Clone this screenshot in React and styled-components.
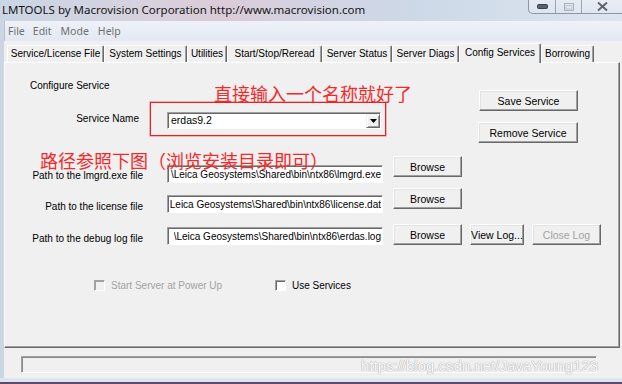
import React from 'react';
import styled, { createGlobalStyle } from 'styled-components';

const Global = createGlobalStyle`
  html, body {
    margin: 0;
    padding: 0;
    background: #4a3a58;
  }
  body {
    width: 622px;
    height: 384px;
    overflow: hidden;
    font-family: "Liberation Sans", Arial, sans-serif;
  }
  * { box-sizing: border-box; }
`;

const Win = styled.div`
  position: relative;
  width: 622px;
  height: 384px;
  display: flex;
  flex-direction: column;
  padding-left: 4px;
  background: linear-gradient(90deg, #cbd6e4 0%, #d6d2df 22%, #dccbd8 36%, #d2d3e2 50%, #cdd9e8 68%, #dde5f0 100%);
  overflow: hidden;
`;

const TitleBar = styled.div`
  height: 21px;
  margin-left: -2px;
  display: flex;
  justify-content: space-between;
  align-items: flex-start;
`;

const TitleText = styled.div`
  font-family: "Noto Sans", "Open Sans", sans-serif;
  font-size: 11.5px;
  line-height: 19px;
  color: #151515;
  white-space: nowrap;
`;

const CaptionGroup = styled.div`
  display: flex;
  height: 14px;
  border: 1px solid rgba(70, 80, 100, 0.55);
  border-top: none;
  border-right: none;
  border-radius: 0 0 0 5px;
  background: linear-gradient(rgba(255,255,255,0.35), rgba(255,255,255,0.15));
`;

const CaptionBtn = styled.div`
  width: ${p => p.$w}px;
  display: flex;
  align-items: center;
  justify-content: center;
  border-left: ${p => (p.$first ? 'none' : '1px solid rgba(70, 80, 100, 0.45)')};
`;

const Client = styled.div`
  flex: 1;
  display: flex;
  flex-direction: column;
  background: #f0f0f0;
`;

const MenuBar = styled.div`
  height: 20px;
  display: flex;
  align-items: center;
  background: linear-gradient(#eef1f8, #e3e8f2);
  border-left: 1px solid #b9c2cf;
`;

const MenuItem = styled.span`
  font-family: "Noto Sans", "Open Sans", sans-serif;
  font-size: 10.5px;
  color: #707070;
  padding: 0 ${p => p.$pad}px 0 ${p => p.$padL}px;
`;

const TabStrip = styled.div`
  height: 21px;
  display: flex;
  align-items: flex-end;
  padding-left: 3px;
`;

const Tab = styled.div`
  position: relative;
  z-index: ${p => (p.$active ? 3 : 0)};
  width: ${p => p.$w}px;
  height: ${p => (p.$active ? 20 : 17)}px;
  margin-bottom: ${p => (p.$active ? -1 : 0)}px;
  display: flex;
  align-items: center;
  justify-content: center;
  padding-bottom: ${p => (p.$active ? 3 : 1)}px;
  font-size: 10px;
  color: #000;
  white-space: nowrap;
  background: #f0f0f0;
  border-top: 1px solid #fff;
  border-left: 1px solid #fff;
  border-right: 1px solid #696969;
  box-shadow: inset -1px 0 #a0a0a0;
  border-radius: 2px 2px 0 0;
`;

const Panel = styled.div`
  position: relative;
  z-index: 1;
  width: 616px;
  height: 286px;
  background: #f0f0f0;
  border: 1px solid;
  border-color: #fff #696969 #696969 #fff;
  box-shadow: inset -1px -1px #a0a0a0;
  display: flex;
  flex-direction: column;
  font-size: 10px;
  color: #000;
`;

const TopArea = styled.div`
  height: 93px;
  display: flex;
  justify-content: space-between;
  align-items: flex-start;
`;

const ConfigCol = styled.div`
  padding: 17px 0 0 25px;
  display: flex;
  flex-direction: column;
`;

const SectionTitle = styled.div`
  line-height: 12px;
`;

const NameRow = styled.div`
  margin-top: 10px;
  display: flex;
  align-items: center;
`;

const FieldLabel = styled.div`
  width: ${p => p.$w}px;
  margin-top: ${p => p.$mt || 0}px;
  text-align: right;
  line-height: 12px;
  white-space: nowrap;
`;

const RedFrame = styled.div`
  margin-left: 11px;
  width: 236px;
  height: 34px;
  padding: 9px 0 0 16px;
  border: 1px solid #ef1d1d;
  box-shadow: 0 0 0 0.6px rgba(240, 40, 40, 0.5);
`;

const Combo = styled.div`
  width: 214px;
  height: 17px;
  display: flex;
  background: #fff;
  border: 1px solid;
  border-color: #a0a0a0 #fff #fff #a0a0a0;
  box-shadow: inset 1px 1px #696969;
`;

const ComboText = styled.div`
  flex: 1;
  padding: 1px 0 0 3px;
  line-height: 13px;
  font-size: 10.5px;
`;

const ComboArrow = styled.div`
  width: 14px;
  margin: 1px 0 0 0;
  display: flex;
  align-items: center;
  justify-content: center;
  background: #f0f0f0;
  border: 1px solid;
  border-color: #f0f0f0 #696969 #696969 #f0f0f0;
  box-shadow: inset 1px 1px #fff, inset -1px -1px #a0a0a0;
`;

const SideButtons = styled.div`
  padding: 27px 41px 0 0;
  display: flex;
  flex-direction: column;
  align-items: flex-end;
  gap: 11px;
`;

const Btn = styled.div`
  width: ${p => p.$w}px;
  height: 21px;
  display: flex;
  align-items: center;
  justify-content: center;
  font-size: 10.5px;
  color: ${p => (p.$disabled ? '#a3a3a3' : '#000')};
  background: #f0f0f0;
  border: 1px solid;
  border-color: #fff #696969 #696969 #fff;
  box-shadow: inset -1px -1px #a0a0a0, inset 1px 1px #e3e3e3;
  white-space: nowrap;
`;

const PathRow = styled.div`
  height: ${p => p.$h}px;
  display: flex;
  align-items: flex-start;
`;

const PathBox = styled.div`
  width: 216px;
  height: 18px;
  margin: ${p => p.$mt}px 0 0 24px;
  display: flex;
  justify-content: flex-end;
  align-items: center;
  overflow: hidden;
  padding-right: 1px;
  background: #fff;
  border: 1px solid;
  border-color: #a0a0a0 #fff #fff #a0a0a0;
  box-shadow: inset 1px 1px #696969;
  font-size: 10px;
`;

const PathText = styled.span`
  white-space: nowrap;
  overflow: hidden;
`;

const RowButtons = styled.div`
  margin-left: 10px;
  display: flex;
  gap: 8px;
`;

const CheckRow = styled.div`
  margin-top: 35px;
  padding-left: 89px;
  display: flex;
  align-items: center;
`;

const CheckItem = styled.div`
  width: ${p => p.$w}px;
  display: flex;
  align-items: center;
  gap: 6px;
  color: ${p => (p.$disabled ? '#a3a3a3' : '#000')};
  white-space: nowrap;
`;

const CheckBox = styled.span`
  width: 11px;
  height: 11px;
  background: ${p => (p.$disabled ? '#f0f0f0' : '#fff')};
  border: 1px solid;
  border-color: #a0a0a0 #fff #fff #a0a0a0;
  box-shadow: inset 1px 1px ${p => (p.$disabled ? '#a0a0a0' : '#696969')};
`;

const Note = styled.div`
  position: absolute;
  left: ${p => p.$x}px;
  top: ${p => p.$y}px;
  font-family: "Noto Sans CJK SC", "Noto Sans", sans-serif;
  font-size: 18px;
  line-height: 18px;
  color: #f42a2a;
  white-space: nowrap;
  pointer-events: none;
`;

const StatusArea = styled.div`
  flex: 1;
  padding: 8px 0 0 17px;
`;

const StatusBox = styled.div`
  width: 576px;
  height: 17px;
  border: 1px solid;
  border-color: #a0a0a0 #fff #fff #a0a0a0;
  box-shadow: inset 1px 1px #8a8a8a;
`;

const BottomFrame = styled.div`
  height: 6px;
  margin-left: -4px;
  background: linear-gradient(#dfe5ee 0 4px, #5c4a6a 4px);
`;

const Watermark = styled.div`
  position: absolute;
  left: 361px;
  top: 357px;
  font-size: 15px;
  line-height: 18px;
  color: #fbfbfb;
  text-shadow: 0 0 1px #9a9a9a, 0 0 1px #b5b5b5;
  white-space: nowrap;
`;

const tabs = [
  { label: 'Service/License File', w: 97 },
  { label: 'System Settings', w: 83 },
  { label: 'Utilities', w: 40 },
  { label: 'Start/Stop/Reread', w: 95 },
  { label: 'Server Status', w: 70 },
  { label: 'Server Diags', w: 67 },
  { label: 'Config Services', w: 82, active: true },
  { label: 'Borrowing', w: 53 },
];

const menus = [
  { label: 'File', l: 3, r: 4 },
  { label: 'Edit', l: 4, r: 5 },
  { label: 'Mode', l: 4, r: 5 },
  { label: 'Help', l: 4, r: 5 },
];

const paths = [
  { label: 'Path to the lmgrd.exe file', text: '\\Leica Geosystems\\Shared\\bin\\ntx86\\lmgrd.exe', h: 32, lt: 14, it: 9 },
  { label: 'Path to the license file', text: 'Leica Geosystems\\Shared\\bin\\ntx86\\license.dat', h: 36, lt: 13, it: 7 },
  { label: 'Path to the debug log file', text: '\\Leica Geosystems\\Shared\\bin\\ntx86\\erdas.log', h: 21, lt: 9, it: 3, log: true },
];

export default function App() {
  return (
    <Win>
      <Global />
      <TitleBar>
        <TitleText>LMTOOLS by Macrovision Corporation http://www.macrovision.com</TitleText>
        <CaptionGroup>
          <CaptionBtn $w={26} $first>
            <svg width="11" height="5" viewBox="0 0 11 5">
              <rect x="0.5" y="0.5" width="10" height="4" rx="1" fill="#5a6070" stroke="#3a3f4a" />
            </svg>
          </CaptionBtn>
          <CaptionBtn $w={26}>
            <svg width="10" height="8" viewBox="0 0 10 8">
              <rect x="0.5" y="0.5" width="9" height="7" fill="none" stroke="#a9b0bc" />
              <rect x="2" y="2.5" width="6" height="3.5" fill="none" stroke="#c0c6cf" />
            </svg>
          </CaptionBtn>
          <CaptionBtn $w={41}>
            <svg width="11" height="9" viewBox="0 0 11 9">
              <path d="M1 0.5 L10 8.5 M10 0.5 L1 8.5" stroke="#5f6470" strokeWidth="2" />
            </svg>
          </CaptionBtn>
        </CaptionGroup>
      </TitleBar>

      <Client>
        <MenuBar>
          {menus.map(m => (
            <MenuItem key={m.label} $padL={m.l} $pad={m.r}>{m.label}</MenuItem>
          ))}
        </MenuBar>

        <TabStrip>
          {tabs.map(t => (
            <Tab key={t.label} $w={t.w} $active={t.active}>{t.label}</Tab>
          ))}
        </TabStrip>

        <Panel>
          <TopArea>
            <ConfigCol>
              <SectionTitle>Configure Service</SectionTitle>
              <NameRow>
                <FieldLabel $w={109}>Service Name</FieldLabel>
                <RedFrame>
                  <Combo>
                    <ComboText>erdas9.2</ComboText>
                    <ComboArrow>
                      <svg width="7" height="4" viewBox="0 0 7 4">
                        <path d="M0 0 H7 L3.5 4 Z" fill="#000" />
                      </svg>
                    </ComboArrow>
                  </Combo>
                </RedFrame>
              </NameRow>
            </ConfigCol>
            <SideButtons>
              <Btn $w={99}>Save Service</Btn>
              <Btn $w={100}>Remove Service</Btn>
            </SideButtons>
          </TopArea>

          {paths.map(p => (
            <PathRow key={p.label} $h={p.h}>
              <FieldLabel $w={138} $mt={p.lt}>{p.label}</FieldLabel>
              <PathBox $mt={p.it}>
                <PathText>{p.text}</PathText>
              </PathBox>
              <RowButtons>
                <Btn $w={69}>Browse</Btn>
                {p.log && <Btn $w={54}>View Log...</Btn>}
                {p.log && <Btn $w={69} $disabled>Close Log</Btn>}
              </RowButtons>
            </PathRow>
          ))}

          <CheckRow>
            <CheckItem $w={181} $disabled>
              <CheckBox $disabled />
              Start Server at Power Up
            </CheckItem>
            <CheckItem $w={100}>
              <CheckBox />
              Use Services
            </CheckItem>
          </CheckRow>

          <Note $x={209} $y={21}>直接输入一个名称就好了</Note>
          <Note $x={35} $y={88}>路径参照下图（浏览安装目录即可）</Note>
        </Panel>

        <StatusArea>
          <StatusBox />
        </StatusArea>
      </Client>
      <BottomFrame />
      <Watermark>https://blog.csdn.net/JavaYoung123</Watermark>
    </Win>
  );
}
